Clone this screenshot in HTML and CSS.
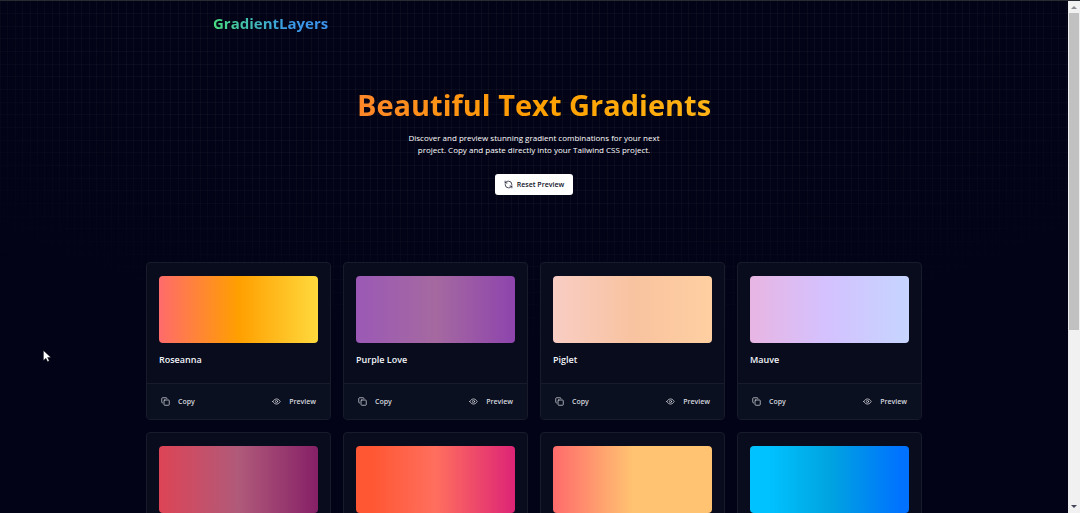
FILE: index.html
```html
<!DOCTYPE html>
<html lang="en">
<head>
<meta charset="utf-8">
<meta name="viewport" content="width=device-width, initial-scale=1">
<title>GradientLayers</title>
<link rel="stylesheet" href="styles.css">
</head>
<body>
<svg class="sprite" aria-hidden="true">
  <symbol id="copy" viewBox="0 0 24 24"><rect x="8" y="8" width="14" height="14" rx="2"/><path d="M4 16c-1.1 0-2-.9-2-2V4c0-1.100.9-2 2-2h10c1.100 0 2 .9 2 2"/></symbol>
  <symbol id="eye" viewBox="0 0 24 24"><path d="M2 12s3.500-7 10-7 10 7 10 7-3.500 7-10 7-10-7-10-7Z"/><circle cx="12" cy="12" r="3"/></symbol>
  <symbol id="reset" viewBox="0 0 24 24"><path d="M21 12a9 9 0 0 0-9-9 9.750 9.750 0 0 0-6.740 2.740L3 8"/><path d="M3 3v5h5"/><path d="M3 12a9 9 0 0 0 9 9 9.750 9.750 0 0 0 6.740-2.740L21 16"/><path d="M16 16h5v5"/></symbol>
</svg>
<div class="window">
  <div class="page">
    <header class="header"><a class="logo" href="#">GradientLayers</a></header>
    <main>
      <section class="hero">
        <h1 class="title">Beautiful Text Gradients</h1>
        <p class="lead">Discover and preview stunning gradient combinations for your next project. Copy and paste directly into your Tailwind CSS project.</p>
        <button class="reset" type="button"><svg class="icon"><use href="#reset"/></svg>Reset Preview</button>
      </section>
      <section class="grid" aria-label="Gradients">
        <article class="card">
          <div class="body"><div class="swatch roseanna"></div><h2 class="name">Roseanna</h2></div>
          <div class="actions"><button class="action" type="button"><svg class="icon"><use href="#copy"/></svg>Copy</button><button class="action" type="button"><svg class="icon"><use href="#eye"/></svg>Preview</button></div>
        </article>
        <article class="card">
          <div class="body"><div class="swatch purple-love"></div><h2 class="name">Purple Love</h2></div>
          <div class="actions"><button class="action" type="button"><svg class="icon"><use href="#copy"/></svg>Copy</button><button class="action" type="button"><svg class="icon"><use href="#eye"/></svg>Preview</button></div>
        </article>
        <article class="card">
          <div class="body"><div class="swatch piglet"></div><h2 class="name">Piglet</h2></div>
          <div class="actions"><button class="action" type="button"><svg class="icon"><use href="#copy"/></svg>Copy</button><button class="action" type="button"><svg class="icon"><use href="#eye"/></svg>Preview</button></div>
        </article>
        <article class="card">
          <div class="body"><div class="swatch mauve"></div><h2 class="name">Mauve</h2></div>
          <div class="actions"><button class="action" type="button"><svg class="icon"><use href="#copy"/></svg>Copy</button><button class="action" type="button"><svg class="icon"><use href="#eye"/></svg>Preview</button></div>
        </article>
        <article class="card"><div class="body"><div class="swatch berry"></div></div></article>
        <article class="card"><div class="body"><div class="swatch ember"></div></div></article>
        <article class="card"><div class="body"><div class="swatch peach"></div></div></article>
        <article class="card"><div class="body"><div class="swatch ocean"></div></div></article>
      </section>
    </main>
  </div>
  <div class="scrollbar" aria-hidden="true">
    <svg class="arrow" viewBox="0 0 12 12"><path d="M3 8 6 5l3 3z" fill="#8b8b92"/></svg>
    <div class="track"><div class="thumb"></div></div>
    <svg class="arrow" viewBox="0 0 12 12"><path d="M3 4h6L6 7z" fill="#45455a"/></svg>
  </div>
</div>
<svg class="pointer" viewBox="0 0 12 18" aria-hidden="true"><path d="M.5.5v12l3-2.500 2 4 2-1-2-4h4z" fill="#fff" stroke="#000" stroke-width=".5"/></svg>
</body>
</html>
```
FILE: styles.css
```css
* { box-sizing: border-box; }
body {
  margin: 0;
  background: #020316;
  color: #f1f3f8;
  font-family: "Open Sans", "Noto Sans", sans-serif;
}
h1, h2, p { margin: 0; }
.sprite { display: none; }
.window { display: flex; height: 100vh; border-top: 1px solid #292b33; }
.page { position: relative; flex: 1; overflow: hidden; }
.page::before {
  content: "";
  position: absolute;
  inset: 0;
  background-image:
    linear-gradient(90deg, #80808012 1px, transparent 1px 7px, #80808012 7px 8px, transparent 8px 15px, #80808012 15px 16px, transparent 16px 22px, #80808012 22px 23px, transparent 23px 30px, #80808012 30px 31px, transparent 31px),
    linear-gradient(transparent 12px, #80808012 12px 13px, transparent 13px 25px, #80808012 25px 26px, transparent 26px 37px, #80808012 37px);
  background-size: 37px 100%, 100% 38px;
  mask-image: radial-gradient(ellipse 700px 330px at 50% 0, #000 60%, transparent 110%);
}
.header, main { position: relative; }
.header { max-width: 642px; margin: 0 auto; padding-top: 11px; }
.logo {
  display: inline-block;
  font-size: 15px;
  line-height: 22px;
  font-weight: 700;
  text-decoration: none;
  color: transparent;
  background: linear-gradient(90deg, #4ade80, #3b9be8 65%, #3b93ee);
  background-clip: text;
}
.hero {
  display: flex;
  flex-direction: column;
  align-items: center;
  max-width: 620px;
  margin: 0 auto;
  padding: 51px 0 67px;
  text-align: center;
}
.title {
  width: 100%;
  font-size: 29px;
  line-height: 40px;
  font-weight: 700;
  color: transparent;
  background: linear-gradient(90deg, #ff7448, #ff9f00, #ffc424);
  background-clip: text;
}
.lead { max-width: 270px; margin-top: 7px; font-size: 8px; line-height: 12px; color: #fff; }
button { font: inherit; cursor: pointer; }
.icon { width: 9px; height: 9px; fill: none; stroke: currentColor; stroke-width: 2; stroke-linecap: round; stroke-linejoin: round; }
.reset {
  display: flex;
  align-items: center;
  gap: 4px;
  height: 21px;
  margin-top: 18px;
  padding: 0 9px;
  border: 0;
  border-radius: 3px;
  background: #fff;
  color: #0f1228;
  font-size: 7px;
  font-weight: 600;
}
.grid {
  display: grid;
  grid-template-columns: repeat(4, 1fr);
  gap: 12px;
  max-width: 776px;
  margin: 0 auto;
}
.card {
  border: 1px solid #171b2a;
  border-radius: 4px;
  background: #080c1d;
  overflow: hidden;
}
.body { padding: 13px 12px 15px; }
.swatch { height: 67px; border-radius: 4px; }
.name { margin-top: 9px; font-size: 9px; line-height: 16px; font-weight: 600; }
.actions {
  display: flex;
  justify-content: space-between;
  padding: 7px 12px 8px;
  border-top: 1px solid #171b2a;
  background: #0b1020;
}
.action {
  display: flex;
  align-items: center;
  gap: 8px;
  height: 20px;
  padding: 0 2px;
  border: 0;
  background: none;
  color: #d5d7df;
  font-size: 7px;
  font-weight: 600;
}
.roseanna { background: linear-gradient(90deg, #ff6b6b, #ff9f00, #ffd93d); }
.purple-love { background: linear-gradient(90deg, #9b59b6, #a569a0, #8e44ad); }
.piglet { background: linear-gradient(90deg, #f8cdc4, #f8c3a0, #ffcfa1); }
.mauve { background: linear-gradient(90deg, #e8b5e3, #d3c2ff, #c6d5ff); }
.berry { background: linear-gradient(90deg, #dd4455, #b05a7a, #862067); }
.ember { background: linear-gradient(90deg, #ff5733, #ff5733 10%, #ff6f5e 50%, #dd2476); }
.peach { background: linear-gradient(90deg, #ff6b6b, #ffc371 50%); }
.ocean { background: linear-gradient(90deg, #00c2ff, #00c2ff 12%, #00a4e0 50%, #0072ff 95%); }
.scrollbar { display: flex; flex-direction: column; width: 12px; background: #f1f1f1; }
.arrow { width: 12px; height: 12px; }
.track { flex: 1; padding: 0 1px; }
.thumb { height: 65%; background: #c1c1c1; }
.pointer { position: absolute; left: 43px; top: 350px; width: 10px; height: 15px; }
```
